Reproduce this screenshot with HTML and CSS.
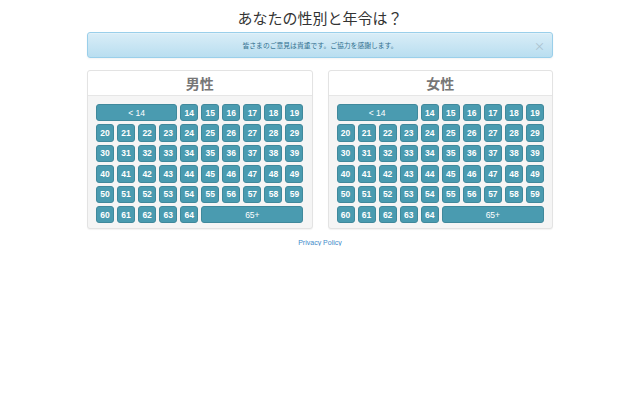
FILE: index.html
```html
<!DOCTYPE html>
<html lang="ja">
<head>
    <meta charset="UTF-8" />
    <meta name="viewport" content="width=device-width, initial-scale=1.0" />
    <title>アンケート</title>
    <link rel="stylesheet" href="styles.css">
</head>
<body>
  <div class="container">
    <h1 class="titulo">あなたの性別と年令は？</h1>

    <div class="alerta">
      皆さまのご意見は貴重です。ご協力を感謝します。
      <span class="fechar">×</span>
    </div>

    <div class="paineis">
      <div class="painel">
        <div class="painel-cabecalho">男性</div>
        <div class="painel-corpo grade" data-sexo="m"></div>
      </div>
      <div class="painel">
        <div class="painel-cabecalho">女性</div>
        <div class="painel-corpo grade" data-sexo="f"></div>
      </div>
    </div>

    <div class="rodape">
      <a href="#">Privacy Policy</a>
    </div>
  </div>

  <script>
    var grades = document.querySelectorAll(".grade");

    for (var g = 0; g < grades.length; g++) {
      var grade = grades[g];
      var html = '<a href="#" class="idade largo4">&lt; 14</a>';

      for (var i = 14; i <= 64; i++) {
        html += '<a href="#" class="idade">' + i + '</a>';
      }

      html += '<a href="#" class="idade largo5">65+</a>';
      grade.innerHTML = html;
    }
  </script>
</body>
</html>
```

FILE: styles.css
```css
body {
    margin: 0;
    background: #fff;
    font-family: "Liberation Sans", "Noto Sans CJK JP", sans-serif;
    color: #333;
}

.container {
    width: 466px;
    margin: 0 auto;
}

.titulo {
    margin: 7px 0 0;
    height: 25px;
    text-align: center;
    font-family: "Noto Sans CJK JP", sans-serif;
    font-size: 15px;
    font-weight: normal;
    line-height: 22px;
    color: #333;
}

.alerta {
    position: relative;
    height: 24px;
    line-height: 24px;
    text-align: center;
    font-family: "Noto Sans CJK JP", sans-serif;
    font-size: 6.8px;
    color: #31708f;
    background: linear-gradient(to bottom, #d9edf7, #b9def0);
    border: 1px solid #9acfea;
    border-radius: 3px;
    box-shadow: inset 0 1px 0 rgba(255, 255, 255, 0.25), 0 1px 2px rgba(0, 0, 0, 0.05);
}

.fechar {
    position: absolute;
    right: 7px;
    top: 1px;
    font-size: 11px;
    color: #a9bfcc;
}

.paineis {
    display: flex;
    gap: 15px;
    margin-top: 12px;
}

.painel {
    width: 224px;
    border: 1px solid #e3e3e3;
    border-radius: 3px;
    background: #f5f5f5;
    box-shadow: 0 1px 1px rgba(0, 0, 0, 0.05);
}

.painel-cabecalho {
    height: 24px;
    line-height: 24px;
    background: #fff;
    border-bottom: 1px solid #e6e6e6;
    border-radius: 3px 3px 0 0;
    text-align: center;
    font-family: "Noto Sans CJK JP", sans-serif;
    font-size: 14px;
    font-weight: bold;
    color: #777;
}

.grade {
    display: grid;
    grid-template-columns: repeat(10, 1fr);
    grid-auto-rows: 17.4px;
    gap: 3px;
    padding: 8px 8px 5px 8px;
}

.idade {
    display: flex;
    align-items: center;
    justify-content: center;
    background: #4a9bb0;
    border: 1px solid #40899c;
    border-radius: 3px;
    color: #fff;
    font-size: 8.5px;
    font-weight: bold;
    text-decoration: none;
}

.largo4 {
    grid-column: span 4;
    font-weight: normal;
}

.largo5 {
    grid-column: span 5;
    font-weight: normal;
}

.rodape {
    margin-top: 10px;
    text-align: center;
    font-size: 7px;
}

.rodape a {
    color: #428bca;
    text-decoration: none;
}
```
